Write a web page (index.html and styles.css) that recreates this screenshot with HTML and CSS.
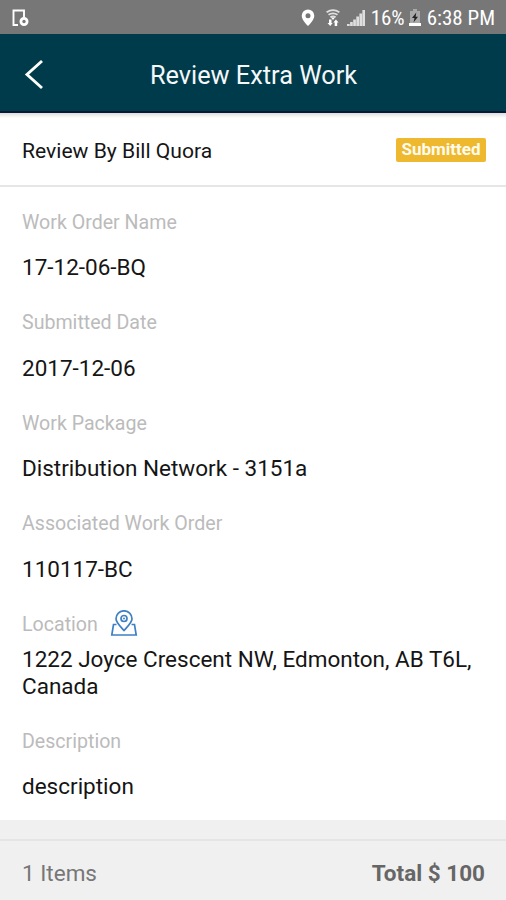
FILE: index.html
```html
<!DOCTYPE html>
<html lang="en">
<head>
  <meta charset="UTF-8">
  <meta name="viewport" content="width=device-width, initial-scale=1.0">
  <title>Review Extra Work</title>
  <link rel="stylesheet" href="styles.css">
</head>
<body>
  <div class="status-bar">
    <svg class="status-device" width="18" height="18" viewBox="0 0 18 18">
      <path d="M7 16H2.500V1.500H13V8" fill="none" stroke="#fff" stroke-width="1.900"/>
      <circle cx="13" cy="12.500" r="3.100" fill="none" stroke="#fff" stroke-width="2.800"/>
    </svg>
    <div class="status-right">
      <svg class="icon-pin" width="14" height="18" viewBox="0 0 14 18">
        <path fill="#fff" fill-rule="evenodd" d="M7 .5a6.300 6.300 0 0 0-6.300 6.300c0 4.400 6.300 10.200 6.300 10.200s6.300-5.800 6.300-10.200A6.300 6.300 0 0 0 7 .5zm0 3.700a2.500 2.500 0 1 1 0 5a2.500 2.500 0 0 1 0-5z"/>
      </svg>
      <svg class="icon-wifi" width="14" height="18" viewBox="0 0 14 18">
        <g fill="none" stroke="#e0e0e0" stroke-width="1.800">
          <path d="M.6 3.200Q7-.8 13.400 3.200M2.500 5.800Q7 2.800 11.500 5.800M4.400 8.300Q7 6.500 9.600 8.300"/>
        </g>
        <path fill="#fff" d="M5 8.500h4L7 11zM3 10.500h2.500v3.500h1.200L4.200 17 1.500 14H3zM11.200 17H8.700v-3.500H7.400l2.500-3 2.700 3h-1.400z"/>
      </svg>
      <svg class="icon-signal" width="18" height="18" viewBox="0 0 18 18">
        <g fill="#dedede">
          <path d="M0 15h2.700v2H0zM3.100 13h2.700v4H3.100zM6.200 10.500h2.700V17H6.200z"/>
          <path d="M9.300 7.500H12V17H9.300zM12.400 4.500h2.700V17h-2.700zM15.400 1H18v16h-2.600z"/>
        </g>
      </svg>
      <span class="battery-text">16%</span>
      <svg class="icon-battery" width="12" height="18" viewBox="0 0 12 18">
        <path fill="#a9a9a9" d="M4 0h4v2h3v12H1V2h3z"/>
        <path fill="#fff" d="M0 14h12v3H0z"/>
        <path fill="#222" d="M7.300 3.500L3 9h2.500L4.500 13.500 9 7.800H6.600z"/>
      </svg>
      <span class="clock">6:38 PM</span>
    </div>
  </div>

  <header class="header">
    <svg class="back" width="22" height="32" viewBox="0 0 22 32">
      <path d="M20 2L5 15.500 20 29" fill="none" stroke="#fff" stroke-width="2.900"/>
    </svg>
    <h1>Review Extra Work</h1>
  </header>

  <div class="reviewer">
    <span class="reviewer-name">Review By Bill Quora</span>
    <span class="badge">Submitted</span>
  </div>

  <main class="details">
    <div class="field">
      <div class="label">Work Order Name</div>
      <div class="value">17-12-06-BQ</div>
    </div>
    <div class="field">
      <div class="label">Submitted Date</div>
      <div class="value">2017-12-06</div>
    </div>
    <div class="field">
      <div class="label">Work Package</div>
      <div class="value">Distribution Network - 3151a</div>
    </div>
    <div class="field">
      <div class="label">Associated Work Order</div>
      <div class="value">110117-BC</div>
    </div>
    <div class="field field-location">
      <div class="label">Location
        <svg class="map-icon" width="28" height="28" viewBox="0 0 28 28">
          <g fill="none" stroke="#3f80c4" stroke-width="1.700">
            <path d="M14 20.500C11 17 6 12.800 6 8.800a8 8 0 0 1 16 0C22 12.800 17 17 14 20.500z"/>
            <circle cx="14" cy="8.500" r="3"/>
            <path d="M6.500 14.500H3.500L1.800 25h24.400L24.500 14.500h-3"/>
          </g>
          <circle cx="14" cy="8.500" r="1" fill="#3f80c4"/>
        </svg>
      </div>
      <div class="value">1222 Joyce Crescent NW, Edmonton, AB T6L, Canada</div>
    </div>
    <div class="field">
      <div class="label">Description</div>
      <div class="value">description</div>
    </div>
  </main>

  <footer class="summary">
    <span>1 Items</span>
    <span class="total">Total $ 100</span>
  </footer>
</body>
</html>
```
FILE: styles.css
```css
* {
  margin: 0;
  padding: 0;
  box-sizing: border-box;
}

body {
  width: 506px;
  height: 900px;
  display: flex;
  flex-direction: column;
  font-family: Roboto, sans-serif;
  background-color: #f0f0f0;
  color: #151515;
  overflow: hidden;
}

.status-bar {
  height: 34px;
  flex: none;
  display: flex;
  align-items: center;
  justify-content: space-between;
  padding: 2px 11px 0;
  background-color: #777;
  color: #fff;
}

.status-right {
  display: flex;
  align-items: center;
  font-size: 21px;
  font-stretch: 75%;
}

.icon-wifi {
  margin-left: 11px;
}

.icon-signal {
  margin: 0 6px 0 7px;
}

.icon-battery {
  margin: 0 6px 0 4px;
}

.header {
  height: 79px;
  flex: none;
  display: grid;
  grid-template-columns: 40px 1fr 40px;
  align-items: center;
  padding: 4px 22px 0;
  background-color: #003b4b;
  border-bottom: 2px solid #0a1838;
  color: #f5f8fa;
}

.header h1 {
  padding: 2px 0 0 1px;
  font-size: 25.3px;
  font-weight: 400;
  text-align: center;
}

.reviewer {
  height: 74px;
  flex: none;
  display: flex;
  align-items: center;
  justify-content: space-between;
  padding: 2px 20px 0 22px;
  background: linear-gradient(#ddd, #fff 5px);
  border-bottom: 2px solid #e6e6e6;
}

.reviewer-name {
  font-size: 21.1px;
}

.badge {
  height: 24px;
  padding: 0 5.5px;
  line-height: 23px;
  border-radius: 2px;
  background-color: #eeb92f;
  color: #fffbed;
  font-size: 17px;
  font-weight: 700;
}

.details {
  height: 633px;
  flex: none;
  padding: 21px 22px 0;
  background-color: #fff;
}

.field {
  height: 100.5px;
}

.label {
  height: 28px;
  display: flex;
  align-items: center;
  margin-bottom: 18px;
  font-size: 19.6px;
  color: #bbb;
}

.value {
  font-size: 22.5px;
  line-height: 27px;
}

.field-location {
  height: 117px;
}

.field-location .label {
  margin-bottom: 8px;
}

.field-location .value {
  line-height: 26.5px;
}

.map-icon {
  margin-left: 12px;
}

.summary {
  flex: 1;
  display: flex;
  align-items: center;
  justify-content: space-between;
  margin-top: 19px;
  padding: 5px 21px 0 22px;
  border-top: 2px solid #e5e5e5;
  font-size: 22.5px;
  color: #777;
}

.total {
  font-weight: 700;
  color: #666;
}
```
